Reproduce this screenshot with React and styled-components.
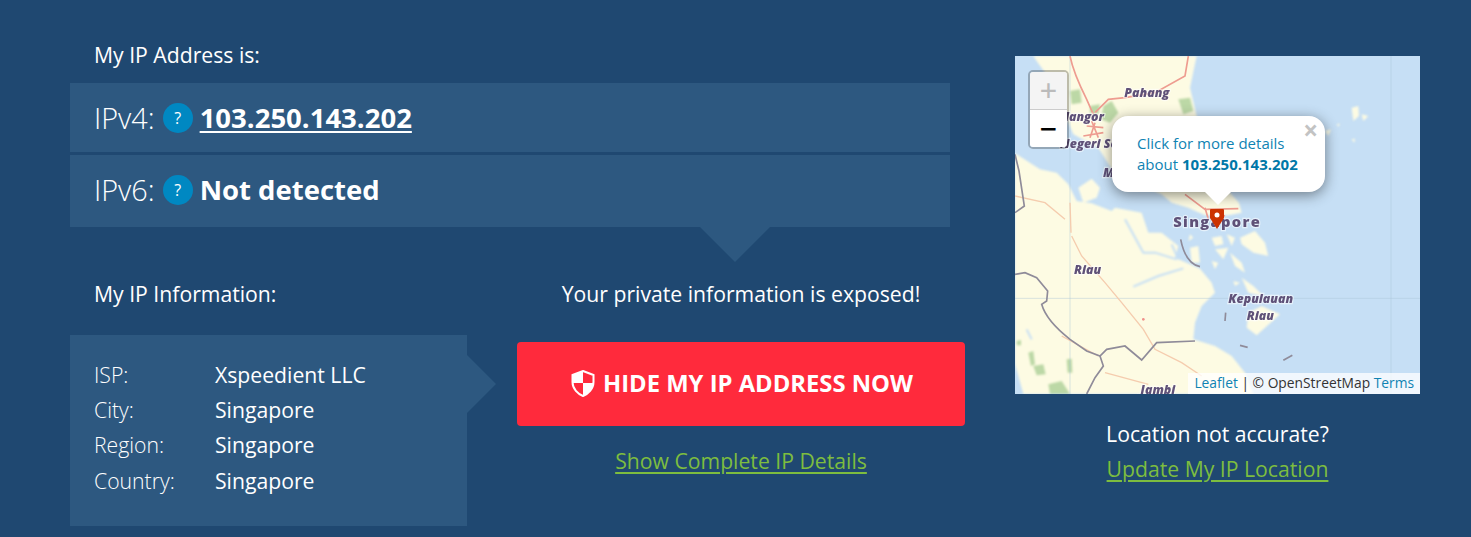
import styled, {createGlobalStyle} from "styled-components";

const GlobalStyle = createGlobalStyle`
  html, body {
    margin: 0;
    background: #1f4871;
    color: #fff;
    font-family: "Open Sans", "Liberation Sans", sans-serif;
  }
`;

const Page = styled.div`
  width: 1471px;
  height: 537px;
  overflow: hidden;
  box-sizing: border-box;
  padding: 35px 0 0 70px;
  display: flex;
  gap: 50px;
`;

const LeftColumn = styled.div`
  width: 895px;
  flex: none;
`;

const Heading = styled.div`
  font-size: 21.2px;
  line-height: 40px;
  padding-left: 24px;
`;

const AddressList = styled.div`
  width: 880px;
  margin-top: 8px;
  display: flex;
  flex-direction: column;
  gap: 3px;
`;

const AddressRow = styled.div`
  position: relative;
  height: ${props => props.$height}px;
  box-sizing: border-box;
  padding: 0 0 ${props => props.$lift || 0}px 24px;
  display: flex;
  align-items: center;
  background: #2d5880;
  ${props => props.$pointer && `
    &::after {
      content: "";
      position: absolute;
      left: 630px;
      top: 100%;
      border-left: 35px solid transparent;
      border-right: 35px solid transparent;
      border-top: 35px solid #2d5880;
    }
  `}
`;

const AddressLabel = styled.span`
  font-size: 28.8px;
  font-weight: 300;
`;

const HelpBadge = styled.span`
  width: 30px;
  height: 30px;
  margin: 0 7px 0 8px;
  border-radius: 50%;
  display: flex;
  align-items: center;
  justify-content: center;
  background: #0088c2;
  font-size: 16px;
  font-weight: 400;
`;

const AddressValue = styled.a`
  font-size: 27.5px;
  font-weight: 700;
  color: #fff;
  text-decoration: ${props => props.$link ? "underline" : "none"};
  text-decoration-thickness: 2px;
  text-underline-offset: 3px;
`;

const InfoGrid = styled.div`
  margin-top: 47px;
  display: flex;
  gap: 50px;
`;

const InfoColumn = styled.div`
  width: 397px;
  flex: none;
`;

const InfoPanel = styled.div`
  position: relative;
  margin-top: 21px;
  width: 397px;
  height: 191px;
  box-sizing: border-box;
  padding: 22px 24px;
  background: #2d5880;
  &::after {
    content: "";
    position: absolute;
    left: 100%;
    top: 20px;
    border-top: 29px solid transparent;
    border-bottom: 29px solid transparent;
    border-left: 29px solid #2d5880;
  }
`;

const InfoRow = styled.div`
  display: grid;
  grid-template-columns: 121px 1fr;
  height: 35.2px;
  line-height: 35px;
  font-size: 21.2px;
`;

const InfoLabel = styled.span`
  font-weight: 300;
`;

const CallToAction = styled.div`
  width: 448px;
  flex: none;
  text-align: center;
`;

const Exposed = styled.div`
  font-size: 21.2px;
  line-height: 40px;
`;

const HideButton = styled.a`
  margin-top: 28px;
  height: 84px;
  box-sizing: border-box;
  padding: 0 0 2px 2px;
  border-radius: 4px;
  display: flex;
  align-items: center;
  justify-content: center;
  gap: 8px;
  background: #ff2a3c;
  color: #fff;
  font-size: 23.8px;
  font-weight: 700;
`;

const GreenLink = styled.a`
  display: block;
  color: #7dbd3f;
  font-size: 21.2px;
  line-height: ${props => props.$lineHeight}px;
  margin-top: ${props => props.$top || 0}px;
  text-decoration: underline;
  text-underline-offset: 3px;
`;

const MapColumn = styled.div`
  width: 405px;
  flex: none;
  padding-top: 21px;
  text-align: center;
`;

const MapFrame = styled.div`
  position: relative;
  width: 405px;
  height: 338px;
  overflow: hidden;
  background: #c6dff5;
  text-align: left;
`;

const MapDrawing = styled.svg`
  display: block;
  width: 405px;
  height: 338px;
  filter: blur(0.4px);
`;

const LandLayer = styled.g`
  filter: blur(2.5px);
`;

const PlaceName = styled.text`
  font-family: "Open Sans", sans-serif;
  font-weight: 800;
  font-style: ${props => props.$upright ? "normal" : "italic"};
  font-size: ${props => props.$size || 37}px;
  letter-spacing: ${props => props.$spacing || 0}px;
  fill: #5f5178;
  stroke: rgba(255, 255, 255, 0.55);
  stroke-width: 7px;
  paint-order: stroke;
`;

const ZoomControl = styled.div`
  position: absolute;
  left: 13px;
  top: 14px;
  width: 37px;
  border: 2px solid rgba(0, 0, 0, 0.25);
  border-radius: 5px;
  background-clip: padding-box;
  overflow: hidden;
`;

const ZoomButton = styled.div`
  height: ${props => props.$height}px;
  display: flex;
  align-items: center;
  justify-content: center;
  font-family: "DejaVu Sans Mono", monospace;
  font-size: 28px;
  background: ${props => props.$disabled ? "#f4f4f4" : "#fff"};
  color: ${props => props.$disabled ? "#bbb" : "#000"};
  border-bottom: ${props => props.$disabled ? "1px solid #ccc" : "none"};
`;

const Popup = styled.div`
  position: absolute;
  left: 97px;
  top: 60px;
  width: 213px;
  height: 76px;
  box-sizing: border-box;
  padding: 17px 0 0 25px;
  border-radius: 16px;
  background: #fff;
  color: #0f83b3;
  font-size: 15px;
  line-height: 21px;
  box-shadow: 0 3px 14px rgba(0, 0, 0, 0.45);
  b {
    font-weight: 700;
    color: #0078a8;
  }
  &::after {
    content: "";
    position: absolute;
    left: 93px;
    top: 100%;
    border-left: 13px solid transparent;
    border-right: 13px solid transparent;
    border-top: 13px solid #fff;
  }
`;

const PopupClose = styled.span`
  position: absolute;
  right: 7px;
  top: 2px;
  font-size: 26px;
  line-height: 24px;
  font-weight: 700;
  color: #c3c3c3;
`;

const Marker = styled.svg`
  position: absolute;
  left: 195px;
  top: 153px;
  width: 14px;
  height: 20px;
`;

const Attribution = styled.div`
  position: absolute;
  right: 0;
  bottom: 0;
  height: 21px;
  padding: 0 6px;
  line-height: 20px;
  font-size: 13.8px;
  color: #333;
  background: rgba(255, 255, 255, 0.75);
  span {
    color: #0f83b3;
  }
`;

const LocationNote = styled.div`
  margin-top: 22px;
  font-size: 21.2px;
  line-height: 35px;
`;

const water = "#c6dff5";
const land = "#fdfbe3";

const greens = [
  "M165,105 L195,100 L200,140 L170,145 Z",
  "M225,150 L255,145 L250,175 L225,175 Z",
  "M265,150 L290,135 L310,170 L285,200 L258,190 Z",
  "M490,130 L525,125 L535,165 L505,175 Z",
  "M5,855 L18,852 L18,868 L6,868 Z",
  "M40,890 L55,885 L60,925 L48,930 Z",
  "M55,930 L85,925 L92,955 L65,958 Z",
  "M155,910 L170,908 L172,950 L158,950 Z",
  "M100,985 L140,975 L165,1014 L105,1014 Z",
];

const islands = [
  "M190,395 L230,368 L255,395 L245,425 L205,440 Z",
  "M1010,155 L1030,150 L1032,180 L1015,195 Z",
  "M1040,175 L1060,180 L1045,195 Z",
  "M930,225 L948,220 L940,240 Z",
  "M965,205 L975,203 L970,212 Z",
  "M1010,250 L1020,248 L1018,260 Z",
  "M525,535 L535,545 L520,555 Z",
  "M525,575 L550,570 L555,620 L530,620 Z",
  "M590,545 L620,540 L625,565 L600,570 Z",
  "M635,535 L660,545 L650,570 Z",
  "M675,545 L720,525 L750,560 L760,600 L715,590 L680,565 Z",
  "M600,580 L640,575 L625,610 Z",
  "M645,590 L680,620 L690,650 L660,630 Z",
  "M590,615 L610,620 L600,640 Z",
  "M680,665 L715,690 L745,720 L700,710 Z",
  "M700,770 L740,750 L795,775 L725,838 L695,815 Z",
  "M655,675 L675,680 L660,690 Z",
];

const borders = [
  "M0,655 L30,650 L65,665 L98,705 L95,735 L80,745 C90,780 120,815 165,850 L215,885 L255,900 L275,880 L330,870 L380,912 L425,860 L540,855",
  "M255,900 L265,930 L240,965 L215,1014",
  "M0,295 L12,345 L28,450 L0,470",
  "M497,550 C505,590 520,625 555,632",
  "M632,770 L630,795",
  "M675,868 L698,874",
  "M805,913 L832,898",
];

const roads = [
  "M170,540 L200,600 L270,680 L320,740 L385,820 L420,880 L500,920 L560,960",
  "M0,420 L90,440 L150,490",
  "M140,840 L250,900",
  "M270,950 L400,985",
  "M165,440 L168,530",
];

const redRoads = [
  "M165,0 C175,50 200,100 215,130 L235,175",
  "M520,0 L510,60 L420,110 L330,125 L280,130 L240,170",
  "M215,210 L265,215 M230,195 L250,245 M205,240 L265,230 M240,200 L225,245",
  "M510,415 L570,460 L670,458",
  "M570,455 L580,490 M600,470 L630,480",
];

function MapTiles() {
  return (
    <MapDrawing viewBox="0 0 1215 1014">
      <rect width="1215" height="1014" fill={water} />
      <LandLayer>
        <path
          fill={land}
          d="M55,0 C80,40 120,80 130,130 L175,235 L250,275 L275,315 L300,355 L440,415 L470,440 L520,455 L570,478 L640,478 L680,470 L672,440 L640,405 L570,300 L545,180 L525,95 L545,0 Z"
        />
        <path
          fill={land}
          d="M0,292 L75,340 L125,350 L160,385 L185,435 L230,442 L290,465 L300,455 L380,470 L400,530 L440,530 L490,570 L480,605 L555,638 L590,680 L600,710 L560,750 L540,800 L535,850 L600,870 L650,900 L690,950 L715,1014 L25,1014 L10,960 L0,925 Z"
        />
        {islands.map(d => <path key={d} d={d} fill={land} />)}
        {greens.map(d => <path key={d} d={d} fill="#bcd8a6" />)}
        <path d="M330,490 L385,590 L420,590 L485,610 M355,692 L430,660 L505,637 M470,565 L490,610 M35,820 L50,850" fill="none" stroke={water} strokeWidth="6" />
      </LandLayer>
      <path d="M165,0 V1014 M1128,0 V1014 M0,727 H1215" fill="none" stroke="#a9c4d8" strokeOpacity="0.45" strokeWidth="3" />
      {roads.map(d => <path key={d} d={d} fill="none" stroke="#f5ccae" strokeWidth="4" />)}
      {redRoads.map(d => <path key={d} d={d} fill="none" stroke="#ee9c90" strokeWidth="5" />)}
      {borders.map(d => <path key={d} d={d} fill="none" stroke="#8f8b99" strokeWidth="5" />)}
      <circle cx="385" cy="790" r="4" fill="#f0908a" />
      <PlaceName x="328" y="122">Pahang</PlaceName>
      <PlaceName x="108" y="194">Selangor</PlaceName>
      <PlaceName x="135" y="275">Negeri Sembilan</PlaceName>
      <PlaceName x="264" y="364">Melaka</PlaceName>
      <PlaceName x="177" y="655">Riau</PlaceName>
      <PlaceName x="640" y="742">Kepulauan</PlaceName>
      <PlaceName x="695" y="793">Riau</PlaceName>
      <PlaceName x="376" y="1014">Jambi</PlaceName>
      <PlaceName x="475" y="513" $upright $size={44} $spacing={4}>Singapore</PlaceName>
    </MapDrawing>
  );
}

function ShieldIcon() {
  return (
    <svg width="24" height="27" viewBox="0 0 24 27">
      <path d="M12 1 L22.5 5 V12 C22.5 19 17 24 12 26 C7 24 1.5 19 1.5 12 V5 Z" fill="none" stroke="#fff" strokeWidth="2" />
      <path d="M12 1 L1.5 5 V13 H12 Z" fill="#fff" />
      <path d="M12 13 H22.5 C22 19 17 24 12 26 Z" fill="#fff" />
    </svg>
  );
}

const info = [
  ["ISP:", "Xspeedient LLC"],
  ["City:", "Singapore"],
  ["Region:", "Singapore"],
  ["Country:", "Singapore"],
];

export default function App() {
  return (
    <>
      <GlobalStyle />
      <Page>
        <LeftColumn>
          <Heading>My IP Address is:</Heading>
          <AddressList>
            <AddressRow $height={69}>
              <AddressLabel>IPv4:</AddressLabel>
              <HelpBadge>?</HelpBadge>
              <AddressValue $link>103.250.143.202</AddressValue>
            </AddressRow>
            <AddressRow $height={72} $lift={3} $pointer>
              <AddressLabel>IPv6:</AddressLabel>
              <HelpBadge>?</HelpBadge>
              <AddressValue>Not detected</AddressValue>
            </AddressRow>
          </AddressList>
          <InfoGrid>
            <InfoColumn>
              <Heading>My IP Information:</Heading>
              <InfoPanel>
                {info.map(([label, value]) => (
                  <InfoRow key={label}>
                    <InfoLabel>{label}</InfoLabel>
                    <span>{value}</span>
                  </InfoRow>
                ))}
              </InfoPanel>
            </InfoColumn>
            <CallToAction>
              <Exposed>Your private information is exposed!</Exposed>
              <HideButton>
                <ShieldIcon />
                HIDE MY IP ADDRESS NOW
              </HideButton>
              <GreenLink $lineHeight={40} $top={15}>Show Complete IP Details</GreenLink>
            </CallToAction>
          </InfoGrid>
        </LeftColumn>
        <MapColumn>
          <MapFrame>
            <MapTiles />
            <ZoomControl>
              <ZoomButton $disabled $height={37}>+</ZoomButton>
              <ZoomButton $height={37}>−</ZoomButton>
            </ZoomControl>
            <Marker viewBox="0 0 14 20">
              <path d="M1 0 H13 Q14 0 14 1 V9 L7 20 L0 9 V1 Q0 0 1 0 Z" fill="#cc3300" />
              <circle cx="7" cy="6" r="2.5" fill="#fff" />
            </Marker>
            <Popup>
              <PopupClose>×</PopupClose>
              Click for more details
              <br />
              about <b>103.250.143.202</b>
            </Popup>
            <Attribution><span>Leaflet</span> | © OpenStreetMap <span>Terms</span></Attribution>
          </MapFrame>
          <LocationNote>Location not accurate?</LocationNote>
          <GreenLink $lineHeight={35}>Update My IP Location</GreenLink>
        </MapColumn>
      </Page>
    </>
  );
}
